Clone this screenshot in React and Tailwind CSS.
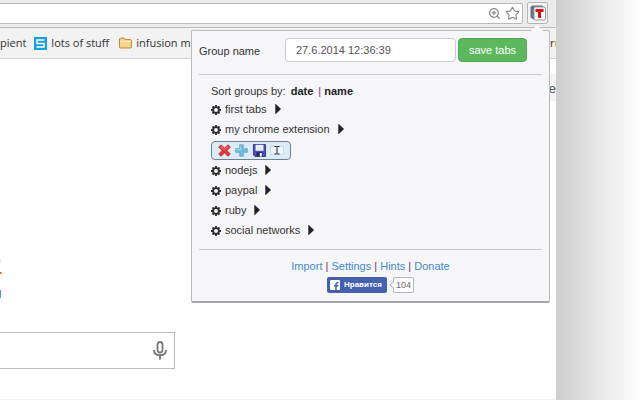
import React, { useState } from "react";
import { Star, ZoomIn } from "lucide-react";

const GROUPS = [
  { name: "first tabs" },
  { name: "my chrome extension", open: true },
  { name: "nodejs" },
  { name: "paypal" },
  { name: "ruby" },
  { name: "social networks" },
];

const FOOTER_LINKS = ["Import", "Settings", "Hints", "Donate"];

const GearIcon = () => (
  <svg viewBox="0 0 20 20" className="h-2.5 w-2.5" aria-hidden="true">
    <circle cx="10" cy="10" r="5.8" fill="none" stroke="#2b2b2b" strokeWidth="3.6" />
    <path
      d="M10 0v4M10 16v4M0 10h4M16 10h4M3 3l2.8 2.8M14.2 14.2L17 17M17 3l-2.8 2.8M5.8 14.2L3 17"
      stroke="#2b2b2b"
      strokeWidth="3.6"
    />
  </svg>
);

const ArrowIcon = () => (
  <svg viewBox="0 0 6 10" className="h-2.5 w-1.5" aria-hidden="true">
    <path d="M0.5 0L5.800 5L0.5 10z" fill="#222" stroke="#222" strokeWidth="0.4" />
  </svg>
);

const DeleteIcon = () => (
  <svg viewBox="0 0 13 13" className="h-[13px] w-[13px]" aria-hidden="true">
    <path
      d="M3 0.8L6.5 4L10 0.8L12.4 3L9 6.5L12.4 10L10 12.3L6.5 9L3 12.3L0.6 10L4 6.5L0.6 3z"
      fill="#e0383a"
      stroke="#b8282b"
      strokeWidth="0.7"
    />
    <path d="M2.9 2.3L6.5 5.6L10.1 2.3" fill="none" stroke="#f58b88" strokeWidth="0.9" />
  </svg>
);

const AddIcon = () => (
  <svg viewBox="0 0 13 13" className="h-[13px] w-[13px]" aria-hidden="true">
    <path
      d="M4.6 0.7h3.8v3.9h4v3.8h-4v3.9H4.6V8.4h-4V4.6h4z"
      fill="#6dbade"
      stroke="#6fa5c0"
      strokeWidth="0.7"
    />
    <path d="M5.6 1.8v3.8H1.6" fill="none" stroke="#a9dcf0" strokeWidth="0.9" />
  </svg>
);

const SaveIcon = () => (
  <svg viewBox="0 0 13 13" className="h-[13px] w-[13px]" aria-hidden="true">
    <path d="M0.5 0.5h12v12H2L0.5 11z" fill="#4b4fc0" stroke="#3a3d98" />
    <path d="M2.5 0.8h8v6h-8z" fill="#e8edfa" />
    <path d="M3.6 8.2h6v4.3h-6z" fill="#23265f" />
    <path d="M6.8 9h2v3.5h-2z" fill="#fff" />
  </svg>
);

const RenameIcon = () => (
  <svg viewBox="0 0 14 12" className="h-3 w-3.5" aria-hidden="true">
    <path d="M0.5 1.5h13v8H0.5z" fill="#eef5fd" stroke="#c4dcf2" />
    <path
      d="M4.5 1.5h2L7 2l0.5-0.5h2M4.5 9h2L7 8.5l0.5 0.5h2M7 2v6.500"
      fill="none"
      stroke="#222"
    />
  </svg>
);

const ACTIONS = [
  { label: "Delete group", Icon: DeleteIcon },
  { label: "Add tab", Icon: AddIcon },
  { label: "Save group", Icon: SaveIcon },
  { label: "Rename group", Icon: RenameIcon },
];

const ExtensionIcon = () => (
  <svg viewBox="0 0 16 16" className="h-4 w-4 shrink-0" aria-hidden="true">
    <path d="M0.500 2L2 0.500h10l2 2v12H3.500l-3-2z" fill="#66727f" />
    <rect x="4" y="2" width="11.500" height="13" rx="1.500" fill="#fff" stroke="#8b95a0" />
    <path d="M5.500 4h8v3h-2.500v6H8V7H5.500z" fill="#e01010" />
  </svg>
);

const MicIcon = () => (
  <svg viewBox="0 0 14 19" className="h-[19px] w-3.5" aria-hidden="true">
    <rect x="4.500" y="1" width="5" height="10.500" rx="2.500" fill="none" stroke="#777" strokeWidth="1.800" />
    <path d="M1 9c0 3.500 2.500 5.300 6 5.300s6-1.800 6-5.300M7 14v4.500" fill="none" stroke="#777" strokeWidth="1.900" />
  </svg>
);

const FolderIcon = () => (
  <svg viewBox="0 0 13 12" className="h-3 w-[13px]" aria-hidden="true">
    <path d="M0.500 10.500V2L1.500 1h3.500l1 1.500h5.500l1 1v7l-0.500 0.500H1z" fill="#f8d488" stroke="#b98a45" />
    <path d="M1 4.500h11" stroke="#fdeec4" />
  </svg>
);

const StuffIcon = () => (
  <svg viewBox="0 0 13 13" className="h-[13px] w-[13px]" aria-hidden="true">
    <path d="M0 0h13v13H0z" fill="#149fe0" />
    <path d="M10.500 3h-7.500v3.500h7v3.500h-7.500" fill="none" stroke="#fff" strokeWidth="1.500" />
  </svg>
);

const Group = ({ name, open }) => (
  <li>
    <div className="flex h-5 items-center">
      <button type="button" aria-label={`Options for ${name}`} className="mr-1 pt-0.5">
        <GearIcon />
      </button>
      <button type="button" className="flex items-center gap-2">
        {name}
        <ArrowIcon />
      </button>
    </div>
    {open && (
      <div className="mt-0.5 flex h-[19px] w-20 items-center justify-between rounded border border-[#6f7f8c] bg-[#dcecf7] px-1.5">
        {ACTIONS.map(({ label, Icon }) => (
          <button key={label} type="button" aria-label={label}>
            <Icon />
          </button>
        ))}
      </div>
    )}
  </li>
);

const Popup = () => {
  const [groupName, setGroupName] = useState("27.6.2014 12:36:39");

  return (
    <div className="absolute top-[30px] right-1.5 w-[359px] rounded-xs border border-b-2 border-[#b9b9bb] border-b-[#a5a5a7] bg-[#f6f6f9] px-[7px] pt-[7px] pb-2 text-[11px] leading-4 text-[#333]">
      <svg viewBox="0 0 12 6" className="absolute -top-1.5 right-1.5 h-1.5 w-3" aria-hidden="true">
        <path d="M0 6L6 0L12 6z" fill="#fff" />
      </svg>

      <form className="flex items-center" onSubmit={(e) => e.preventDefault()}>
        <label htmlFor="group-name" className="w-[86px] pt-0.5">
          Group name
        </label>
        <input
          id="group-name"
          type="text"
          className="h-6 w-[171px] rounded border border-[#ccc] bg-white px-2.5 text-[#555]"
          value={groupName}
          onChange={(e) => setGroupName(e.target.value)}
        />
        <button
          type="submit"
          className="ml-0.5 h-6 w-[69px] rounded border border-[#4cae4c] bg-[#5cb85c] text-white"
        >
          save tabs
        </button>
      </form>

      <hr className="mt-3 border-[#ccc]" />

      <div className="mt-2 px-3">
        <p>
          Sort groups by:{" "}
          <button type="button" className="px-0.5 font-bold text-[#222]">
            date
          </button>{" "}
          <span className="text-[#7d2a6b]">|</span>{" "}
          <button type="button" className="font-bold text-[#222]">
            name
          </button>
        </p>
        <ul>
          {GROUPS.map((g) => (
            <Group key={g.name} {...g} />
          ))}
        </ul>
      </div>

      <hr className="mt-[9px] border-[#ccc]" />

      <div className="mt-2 text-center text-[#7d2a6b]">
        {FOOTER_LINKS.map((link, i) => (
          <React.Fragment key={link}>
            {i > 0 && " | "}
            <a href={`#${link.toLowerCase()}`} className="text-[#428bca]">
              {link}
            </a>
          </React.Fragment>
        ))}
      </div>

      <div className="mt-[3px] flex items-center justify-center">
        <button
          type="button"
          className="flex h-4 w-[60px] items-center gap-1 rounded-xs bg-[#4460ae] pl-[3px] text-[8px] font-bold text-white"
        >
          <svg viewBox="0 0 10 10" className="h-2.5 w-2.5 shrink-0" aria-hidden="true">
            <rect width="10" height="10" rx="1" fill="#fff" />
            <path d="M6 10V4.500Q6 2.500 8.500 2.700M4 5.700h4.500" fill="none" stroke="#4460ae" strokeWidth="1.500" />
          </svg>
          Нравится
        </button>
        <svg viewBox="0 0 5 8" className="relative z-10 -mr-px ml-0.5 h-2 w-[5px]" aria-hidden="true">
          <path d="M5 0.500L1 4L5 7.500" fill="#fff" stroke="#a5a7ad" />
        </svg>
        <span className="h-4 rounded-xs border border-[#b5b7bd] bg-white px-0.5 text-[9px] leading-3.5 text-[#666]">
          104
        </span>
      </div>
    </div>
  );
};

const App = () => (
  <div className="flex h-screen overflow-hidden bg-white font-['Liberation_Sans',Arial,sans-serif]">
    <div className="relative flex w-[556px] shrink-0 flex-col overflow-hidden">
      <div className="flex h-7 items-start border-b border-[#bdbdbd] bg-[#ececec]">
        <div className="mt-[3px] flex h-[21px] flex-1 items-center justify-end gap-1 rounded-r-xs border border-l-0 border-[#b8b8b8] bg-white pr-0.5 text-[#888]">
          <button type="button" aria-label="Zoom">
            <ZoomIn size={13} strokeWidth={2.4} />
          </button>
          <button type="button" aria-label="Bookmark this page">
            <Star size={15} strokeWidth={1.8} />
          </button>
        </div>
        <button
          type="button"
          aria-label="Tab groups"
          className="mt-0.5 mr-2 ml-1 flex h-[22px] w-[21px] items-center justify-center rounded-xs border border-[#b5b5b5] bg-[#f4f4f4]"
        >
          <ExtensionIcon />
        </button>
      </div>

      <nav className="flex h-[31px] items-center border-b border-[#d2d2d2] bg-[#f2f2f2] font-['Open_Sans',sans-serif] text-[11px] whitespace-nowrap text-[#333]">
        <a href="#recipient">pient</a>
        <a href="#stuff" className="ml-2 flex items-center gap-1">
          <StuffIcon />
          lots of stuff
        </a>
        <a href="#infusion" className="ml-2.5 flex items-center gap-1">
          <FolderIcon />
          infusion m
        </a>
        <a href="#ru" className="ml-auto w-1.5">
          r<span className="text-[#d99a1c]">u</span>
        </a>
      </nav>

      <main className="flex flex-1 flex-col border-b border-[#eee]">
        <div className="mt-3.5 ml-auto h-7 w-2 bg-[#f4f4f4] text-right text-[13px] leading-8 text-[#555]">
          e
        </div>
        <svg viewBox="0 0 2 60" className="mt-36 h-[60px] w-0.5" aria-hidden="true">
          <path d="M0 27h1.500v2H0z" fill="#e0523f" />
          <path d="M0 14h1v4H0z" fill="#e6e6e6" />
          <path d="M0 45h1v8H0z" fill="#5b8def" />
        </svg>
        <div className="mt-[27px] flex h-[37px] w-[175px] items-center border border-l-0 border-[#b9b9b9]">
          <input type="text" aria-label="Search" className="min-w-0 flex-1 outline-none" />
          <button type="button" aria-label="Search by voice" className="mr-[7px]">
            <MicIcon />
          </button>
        </div>
      </main>

      <Popup />
    </div>
    <div className="flex-1 bg-linear-to-r from-[#cecece] to-white" />
  </div>
);

export default App;
